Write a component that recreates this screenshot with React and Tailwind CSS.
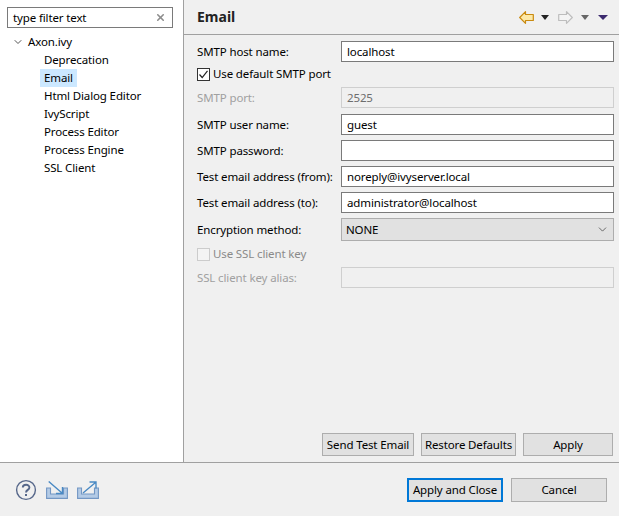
import React from 'react';
import { ChevronDown, X } from 'lucide-react';

const treeItems = ['Deprecation', 'Email', 'Html Dialog Editor', 'IvyScript', 'Process Editor', 'Process Engine', 'SSL Client'];

function Triangle({ className }) {
  return <div className={`w-0 h-0 border-l-[4px] border-r-[4px] border-t-[5px] border-l-transparent border-r-transparent ${className}`} />;
}

function ArrowIcon({ flip, stroke, fill }) {
  return (
    <svg width="15" height="13" viewBox="0 0 15 13" className={flip ? '-scale-x-100' : ''}>
      <path d="M0.7 6.5 L6.5 0.7 V3.5 H14.3 V9.5 H6.5 V12.3 Z" fill={fill} stroke={stroke} strokeWidth="1.2" strokeLinejoin="round" />
    </svg>
  );
}

function Field({ label, value, disabled, className = 'mb-[5px]' }) {
  return (
    <div className={`flex items-center h-[21px] ${className}`}>
      <div className={`w-[144px] shrink-0 whitespace-nowrap ${disabled ? 'text-[#a0a0a0]' : ''}`}>{label}</div>
      <div className={`flex-1 h-full flex items-center px-[5px] border ${disabled ? 'border-[#cfcfcf] bg-[#f0f0f0] text-[#6d6d6d]' : 'border-[#7a7a7a] bg-white'}`}>
        {value}
      </div>
    </div>
  );
}

function Check({ label, checked, disabled }) {
  return (
    <div className={`flex items-center gap-[3px] ${disabled ? 'text-[#8a8a8a]' : ''}`}>
      <div className={`w-[13px] h-[13px] border flex items-center justify-center ${disabled ? 'border-[#cccccc] bg-[#f4f4f4]' : 'border-[#333333] bg-white'}`}>
        {checked && (
          <svg width="11" height="11" viewBox="0 0 11 11">
            <path d="M1.5 5.5 L4.2 8.5 L9.5 1.8" fill="none" stroke="#222222" strokeWidth="1.2" />
          </svg>
        )}
      </div>
      <span>{label}</span>
    </div>
  );
}

function Button({ children, className }) {
  return (
    <div className={`flex items-center justify-center whitespace-nowrap border border-[#adadad] bg-[#e1e1e1] ${className}`}>
      {children}
    </div>
  );
}

function TrayIcon({ out }) {
  return (
    <svg width="22" height="18" viewBox="0 0 22 18">
      <path d="M0.6 7 H4.5 V13 H17.5 V7 H21.4 V17.4 H0.6 Z" fill="#b4cbe6" stroke="#7397c4" strokeWidth="1.1" />
      {out ? (
        <path d="M6 12 L18.5 1.5 M12.5 1 H19 V7.5" fill="none" stroke="#4a8ac4" strokeWidth="1.4" />
      ) : (
        <path d="M2.7 0.5 L16 12 M16.5 6 V12.5 H10" fill="none" stroke="#4a8ac4" strokeWidth="1.4" />
      )}
    </svg>
  );
}

export default function App() {
  return (
    <div className="w-[619px] h-[516px] flex flex-col overflow-hidden bg-[#f0f0f0] text-[11.5px] tracking-[-0.13px] leading-[16px] text-black font-['Noto_Sans','Open_Sans',sans-serif]">
      <div className="flex flex-1 min-h-0">
        {/* Tree side */}
        <div className="w-[184px] shrink-0 bg-white border-r border-[#a0a0a0] pt-[7px] px-[7px]">
          <div className="h-[21px] w-[166px] border border-[#7a7a7a] flex items-center justify-between pl-[5px] pr-[6px]">
            <span>type filter text</span>
            <X size={11} strokeWidth={3.5} className="text-[#8d8d8d]" />
          </div>
          <div className="mt-[5px] flex items-center h-[18px]">
            <ChevronDown size={12} strokeWidth={2} className="text-[#555555] ml-[5px] mr-[3px]" />
            <span className="ml-[1px]">Axon.ivy</span>
          </div>
          {treeItems.map((item) => (
            <div key={item} className="h-[18px] flex items-center pl-[37px]">
              <span className={`h-[18px] px-[4px] -ml-[4px] flex items-center ${item === 'Email' ? 'bg-[#cce8ff]' : ''}`}>{item}</span>
            </div>
          ))}
        </div>

        {/* Preference page */}
        <div className="flex-1 flex flex-col min-w-0">
          <div className="h-[35px] shrink-0 border-b border-[#a0a0a0] flex items-center justify-between pl-[13px] pr-[11px]">
            <span className="text-[14px] tracking-normal font-bold text-[#222222]">Email</span>
            <div className="flex items-center">
              <ArrowIcon stroke="#c98a10" fill="#fde9a8" />
              <Triangle className="border-t-[#222222] ml-[7px]" />
              <div className="w-[9px]" />
              <ArrowIcon flip stroke="#bdbdbd" fill="#f4f4f4" />
              <Triangle className="border-t-[#666666] ml-[8px]" />
              <Triangle className="border-t-[#3c2a6e] ml-[9px] border-l-[5px] border-r-[5px]" />
            </div>
          </div>
          <div className="flex-1 flex flex-col pl-[13px] pr-[5px] pt-[6px] pb-[6px]">
            <Field label="SMTP host name:" value="localhost" className="mb-[4px]" />
            <div className="h-[16px] mb-[5px]"><Check label="Use default SMTP port" checked /></div>
            <Field label="SMTP port:" value="2525" disabled className="mb-[6px]" />
            <Field label="SMTP user name:" value="guest" />
            <Field label="SMTP password:" value="" />
            <Field label="Test email address (from):" value="noreply@ivyserver.local" />
            <Field label="Test email address (to):" value="administrator@localhost" />
            <div className="flex items-center h-[23px] mb-[5px]">
              <div className="w-[144px] shrink-0">Encryption method:</div>
              <div className="flex-1 h-full bg-[#e1e1e1] border border-[#adadad] flex items-center justify-between pl-[4px] pr-[4px]">
                <span>NONE</span>
                <ChevronDown size={13} strokeWidth={1.4} className="text-[#444444]" />
              </div>
            </div>
            <div className="h-[16px] mb-[5px]"><Check label="Use SSL client key" disabled /></div>
            <Field label="SSL client key alias:" value="" disabled />
            <div className="mt-auto flex justify-end gap-[7px] pr-[1px]">
              <Button className="w-[92px] h-[23px]">Send Test Email</Button>
              <Button className="w-[95px] h-[23px]">Restore Defaults</Button>
              <Button className="w-[90px] h-[23px]">Apply</Button>
            </div>
          </div>
        </div>
      </div>

      {/* Dialog footer */}
      <div className="h-[54px] shrink-0 border-t border-[#a0a0a0] flex items-center justify-between pl-[15px] pr-[12px]">
        <div className="flex items-center gap-[9px]">
          <svg width="22" height="22" viewBox="0 0 22 22">
            <circle cx="11" cy="11" r="9.4" fill="none" stroke="#56678a" strokeWidth="1.4" />
            <path d="M7.8 8.5 C7.8 4.8 14.4 4.8 14.4 8.5 C14.4 11 11 10.8 11 13.5" fill="none" stroke="#56678a" strokeWidth="1.9" />
            <rect x="10" y="15" width="2" height="2" fill="#56678a" />
          </svg>
          <TrayIcon />
          <TrayIcon out />
        </div>
        <div className="flex gap-[8px]">
          <div className="w-[96px] h-[24px] flex items-center justify-center whitespace-nowrap border-2 border-[#0078d7] bg-[#e1e1e1]">Apply and Close</div>
          <Button className="w-[96px] h-[24px]">Cancel</Button>
        </div>
      </div>
    </div>
  );
}
